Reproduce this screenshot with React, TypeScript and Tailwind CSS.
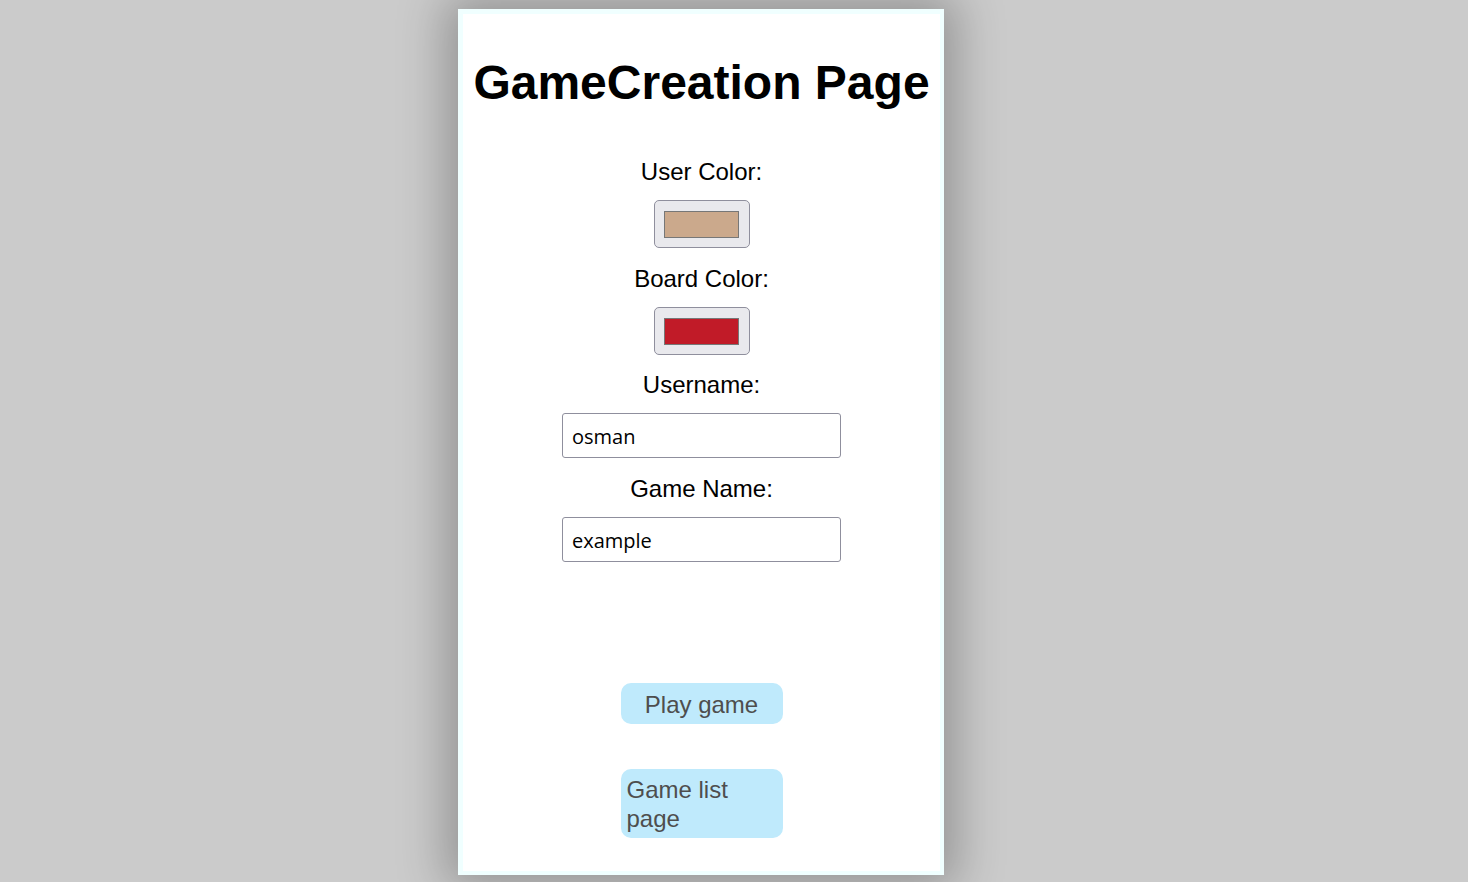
import { useState } from "react";

export default function App() {
  const [username, setUsername] = useState("osman");
  const [gameName, setGameName] = useState("example");

  return (
    <div className="min-h-[882px] w-full bg-[#cbcbcb] pt-[9px] pb-[7px] font-['Liberation_Sans',Arial,sans-serif]">
      <div className="ml-[458px] w-[486px] border-[5px] border-r-4 border-b-4 border-[#f0ffff] bg-white shadow-[0_0_45px_12px_rgba(0,0,0,0.28)]">
        <div className="flex h-[857px] flex-col items-center">
          <h1 className="mt-[41px] text-[48px] font-bold leading-[55px] text-black">
            GameCreation Page
          </h1>

          <label className="mt-[48px] text-[24px] leading-[28px] text-black">User Color:</label>
          <ColorSwatch color="#cba98c" className="mt-[14px]" />

          <label className="mt-[17px] text-[24px] leading-[28px] text-black">Board Color:</label>
          <ColorSwatch color="#c11b28" className="mt-[14px]" />

          <label className="mt-[16px] text-[24px] leading-[28px] text-black">Username:</label>
          <input
            value={username}
            onChange={(e) => setUsername(e.target.value)}
            className="mt-[14px] h-[45px] w-[279px] rounded-[3px] border border-[#8f8f9d] px-[9px] pt-[2px] font-['Open_Sans',sans-serif] text-[20px] text-black outline-none"
          />

          <label className="mt-[17px] text-[24px] leading-[28px] text-black">Game Name:</label>
          <input
            value={gameName}
            onChange={(e) => setGameName(e.target.value)}
            className="mt-[14px] h-[45px] w-[279px] rounded-[3px] border border-[#8f8f9d] px-[9px] pt-[2px] font-['Open_Sans',sans-serif] text-[20px] text-black outline-none"
          />

          <button
            type="button"
            className="mt-[121px] w-[162px] rounded-[10px] bg-[#bfeafc] pt-[7px] pb-[5px] text-center text-[24px] leading-[29px] text-[#4e4e4e]"
          >
            Play game
          </button>

          <a
            href="#"
            className="mt-[45px] block w-[162px] rounded-[10px] bg-[#bfeafc] px-[6px] py-[5.5px] text-left text-[24px] leading-[29px] text-[#4e4e4e]"
          >
            Game list page
          </a>
        </div>
      </div>
    </div>
  );
}

function ColorSwatch({ color, className }: { color: string; className?: string }) {
  return (
    <div
      className={`flex h-[48px] w-[96px] items-center justify-center rounded-[5px] border border-[#8f8f9d] bg-[#e9e9ed] ${className ?? ""}`}
    >
      <div className="h-[27px] w-[75px] border border-[#777]" style={{ backgroundColor: color }} />
    </div>
  );
}
